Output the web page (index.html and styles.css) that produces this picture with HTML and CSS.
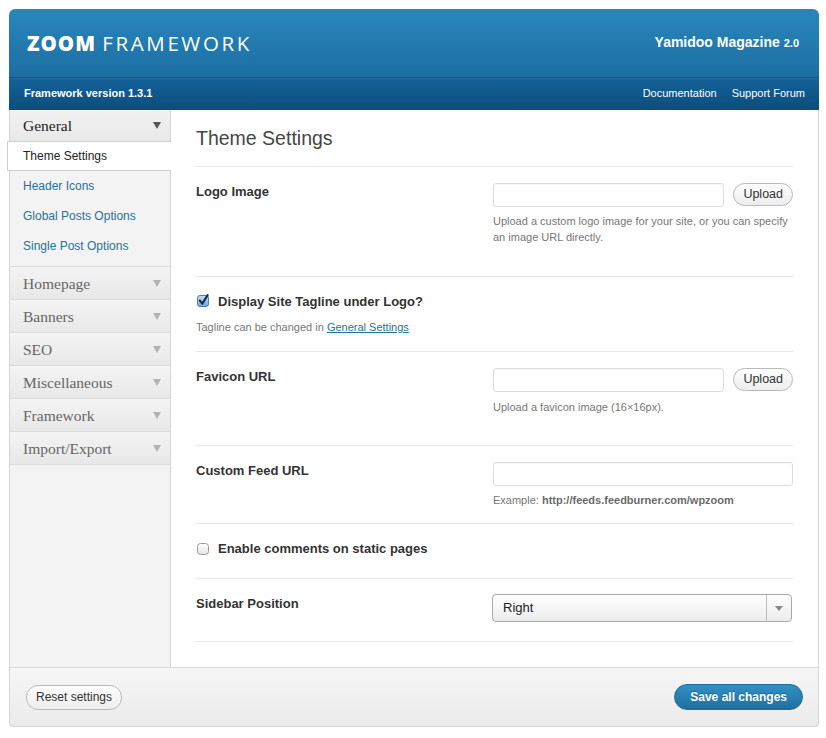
FILE: index.html
```html
<!DOCTYPE html>
<html>
<head>
<meta charset="utf-8">
<title>ZOOM Framework</title>
<link rel="stylesheet" href="styles.css">
</head>
<body>
<div class="panel">
  <header class="top">
    <div class="brand"><span class="b1">ZOOM</span> <span class="b2">FRAMEWORK</span></div>
    <div class="theme">Yamidoo Magazine <small>2.0</small></div>
  </header>
  <div class="subbar">
    <span class="ver">Framework version 1.3.1</span>
    <nav class="links"><a href="#">Documentation</a><a href="#">Support Forum</a></nav>
  </div>
  <div class="body">
    <aside class="side">
      <div class="head head-open">General<i class="arrow"></i></div>
      <ul class="sub">
        <li class="active">Theme Settings</li>
        <li><a href="#">Header Icons</a></li>
        <li><a href="#">Global Posts Options</a></li>
        <li><a href="#">Single Post Options</a></li>
      </ul>
      <div class="head first">Homepage<i class="arrow"></i></div>
      <div class="head">Banners<i class="arrow"></i></div>
      <div class="head">SEO<i class="arrow"></i></div>
      <div class="head">Miscellaneous<i class="arrow"></i></div>
      <div class="head">Framework<i class="arrow"></i></div>
      <div class="head">Import/Export<i class="arrow"></i></div>
    </aside>
    <main class="main">
      <h1 class="title">Theme Settings</h1>

      <div class="row row-upload">
        <label class="label">Logo Image</label>
        <div class="field">
          <div class="upload"><span class="input short"></span><span class="btn">Upload</span></div>
          <p class="help">Upload a custom logo image for your site, or you can specify an image URL directly.</p>
        </div>
      </div>

      <div class="row row-check">
        <div class="check">
          <svg class="cb" width="13" height="13" viewBox="0 0 13 13">
            <defs><linearGradient id="cbg" x1="0" y1="0" x2="0" y2="1"><stop offset="0" stop-color="#c7ddf6"/><stop offset="1" stop-color="#6aa3e2"/></linearGradient></defs>
            <rect x="0.5" y="1.5" width="11" height="11" rx="2.5" fill="url(#cbg)" stroke="#4f7fb6"/>
            <path d="M2.8 6.6 L5.3 9.6 L10.6 1.2" fill="none" stroke="#1d2943" stroke-width="2.1" stroke-linecap="round" stroke-linejoin="round"/>
          </svg>
          <span class="label">Display Site Tagline under Logo?</span>
        </div>
        <p class="help tagline">Tagline can be changed in <a href="#">General Settings</a></p>
      </div>

      <div class="row row-upload fav">
        <label class="label">Favicon URL</label>
        <div class="field">
          <div class="upload"><span class="input short"></span><span class="btn">Upload</span></div>
          <p class="help">Upload a favicon image (16×16px).</p>
        </div>
      </div>

      <div class="row row-feed">
        <label class="label">Custom Feed URL</label>
        <div class="field">
          <span class="input"></span>
          <p class="help">Example: <b>http://feeds.feedburner.com/wpzoom</b></p>
        </div>
      </div>

      <div class="row row-check2">
        <div class="check">
          <svg class="cb" width="13" height="13" viewBox="0 0 13 13">
            <defs><linearGradient id="cbu" x1="0" y1="0" x2="0" y2="1"><stop offset="0" stop-color="#ffffff"/><stop offset="1" stop-color="#e4e4e4"/></linearGradient></defs>
            <rect x="0.5" y="0.5" width="11" height="11" rx="3" fill="url(#cbu)" stroke="#9c9c9c"/>
          </svg>
          <span class="label">Enable comments on static pages</span>
        </div>
      </div>

      <div class="row row-select">
        <label class="label">Sidebar Position</label>
        <div class="field">
          <div class="select"><span class="sel-val">Right</span><span class="sel-btn"><i class="sel-arrow"></i></span></div>
        </div>
      </div>
    </main>
  </div>
  <footer class="foot">
    <span class="btn btn-reset">Reset settings</span>
    <span class="btn-save">Save all changes</span>
  </footer>
</div>
</body>
</html>
```

FILE: styles.css
```css
* { box-sizing: border-box; }
html, body { margin: 0; padding: 0; background: #fff; }
body { font-family: "Liberation Sans", Arial, sans-serif; color: #333; }

.panel { width: 810px; margin: 9px 0 0 9px; }

/* header */
.top {
  height: 68px;
  display: flex;
  align-items: center;
  justify-content: space-between;
  padding: 0 20px 0 18px;
  border-radius: 6px 6px 0 0;
  background: linear-gradient(#2987bd, #1c6ea2);
  color: #fff;
}
.brand { font-family: "Open Sans", sans-serif; font-size: 20.5px; line-height: 24px; }
.brand .b1 { font-weight: 800; letter-spacing: 1px; }
.brand .b2 { font-weight: 400; letter-spacing: 2.6px; margin-left: 1px; }
.theme { font-weight: bold; font-size: 14px; margin-top: -2px; }
.theme small { font-size: 11px; }

.subbar {
  height: 33px;
  display: flex;
  align-items: center;
  justify-content: space-between;
  padding: 0 14px 3px 15px;
  background: linear-gradient(#14629a, #0c4d7b);
  border-top: 1px solid #0f5684;
  box-shadow: inset 0 1px 0 rgba(255,255,255,0.08);
  color: #fff;
  font-size: 11px;
}
.ver { font-weight: bold; }
.links { display: flex; gap: 15px; }
.links a { color: #fff; text-decoration: none; }

/* body */
.body {
  display: flex;
  border-left: 1px solid #d5d5d5;
  border-right: 1px solid #d5d5d5;
}
.side {
  width: 161px;
  flex: none;
  background: #f3f3f3;
  border-right: 1px solid #d6d6d6;
}
.head {
  position: relative;
  height: 33px;
  line-height: 33px;
  padding-left: 13px;
  font-family: "Liberation Serif", "Times New Roman", serif;
  font-size: 15.5px;
  color: #666;
  background: linear-gradient(#f4f4f4, #e8e8e8);
  border-bottom: 1px solid #dcdcdc;
}
.head.first { border-top: 1px solid #dcdcdc; height: 34px; }
.head-open { height: 31px; line-height: 31px; color: #222; border-bottom: 0; background: linear-gradient(#f2f2f2, #e8e8e8); }
.arrow {
  position: absolute;
  right: 9px;
  top: 13px;
  width: 0; height: 0;
  border-left: 4px solid transparent;
  border-right: 4px solid transparent;
  border-top: 7px solid #b3b3b3;
}
.head-open .arrow { border-top-color: #555; top: 12px; }

.sub { list-style: none; margin: 0; padding: 0 0 5px; }
.sub li { height: 30px; line-height: 30px; padding-left: 13px; font-size: 12px; }
.sub li a { color: #21759b; text-decoration: none; }
.sub li.active {
  background: #fff;
  color: #222;
  border: 1px solid #cfcfcf;
  border-right: 0;
  line-height: 28px;
  margin: 0 -1px 0 -3px;
  padding-left: 15px;
}

.main { flex: 1; background: #fff; padding: 0 25px 25px; }
.title {
  margin: 0;
  padding: 16px 0 16px;
  font-size: 19.5px;
  line-height: 24px;
  font-weight: normal;
  color: #464646;
  border-bottom: 1px solid #e8e8e8;
}
.row {
  display: grid;
  grid-template-columns: 297px 300px;
  border-bottom: 1px solid #e8e8e8;
  padding: 16px 0 16px;
}
.label { font-weight: bold; font-size: 13px; line-height: 16px; color: #333; padding-top: 1px; }
.help { margin: 6px 0 0; font-size: 11px; line-height: 16px; color: #777; }
.help b { color: #6a6a6a; }
.help a { color: #21759b; }

.row-upload { padding-bottom: 31px; }
.row-upload.fav { padding-bottom: 30px; }
.row-upload.fav .help { margin-top: 7px; }
.upload { display: flex; gap: 9px; align-items: flex-start; }
.input {
  display: block;
  height: 24px;
  border: 1px solid #dcdcdc;
  border-radius: 3px;
  background: #fff;
  box-shadow: inset 0 1px 1px rgba(0,0,0,0.03);
}
.input.short { width: 232px; }
.btn {
  display: inline-block;
  height: 23px;
  line-height: 21px;
  padding: 0 9px;
  border: 1px solid #b9b9b9;
  border-radius: 12px;
  background: linear-gradient(#fefefe, #ededed);
  font-size: 12.5px;
  color: #333;
}

.row-check, .row-check2 { display: block; }
.check { display: flex; align-items: center; gap: 8px; }
.check .cb { flex: none; margin-left: 1px; }
.check .label { padding-top: 0; }
.row-check { padding-top: 17px; }
.row-check .check .cb { margin-top: -3px; }
.tagline { margin-top: 9px; }
.row-check2 { padding: 17px 0 21px; }

.row-feed { padding-bottom: 15px; }
.row-select { padding: 15px 0 19px; }
.row-select .label { padding-top: 2px; }
.select {
  display: flex;
  height: 28px;
  margin: 0 1px 0 -1px;
  border: 1px solid #a9a9a9;
  border-radius: 4px;
  background: linear-gradient(#ffffff, #ececec);
}
.sel-val { flex: 1; padding-left: 10px; line-height: 26px; font-size: 13px; color: #222; }
.sel-btn { width: 25px; border-left: 1px solid #bdbdbd; display: flex; align-items: center; justify-content: center; }
.sel-arrow {
  width: 0; height: 0;
  border-left: 4.5px solid transparent;
  border-right: 4.5px solid transparent;
  border-top: 5px solid #888;
}

/* footer */
.foot {
  height: 60px;
  display: flex;
  justify-content: space-between;
  align-items: flex-start;
  padding: 16px 15px 0 16px;
  border: 1px solid #d5d5d5;
  border-top-color: #dadada;
  border-radius: 0 0 4px 4px;
  background: linear-gradient(#f6f6f6, #ebebeb);
}
.btn-reset { height: 25px; line-height: 23px; font-size: 12px; padding: 0 9px; margin-top: 1px; }
.btn-save {
  height: 26px;
  line-height: 24px;
  padding: 0 15px;
  border: 1px solid #1f6d98;
  border-radius: 13px;
  background: linear-gradient(#3190c6, #1f6f9e);
  color: #fff;
  font-weight: bold;
  font-size: 12px;
  text-shadow: 0 -1px 0 rgba(0,0,0,0.25);
}
```
